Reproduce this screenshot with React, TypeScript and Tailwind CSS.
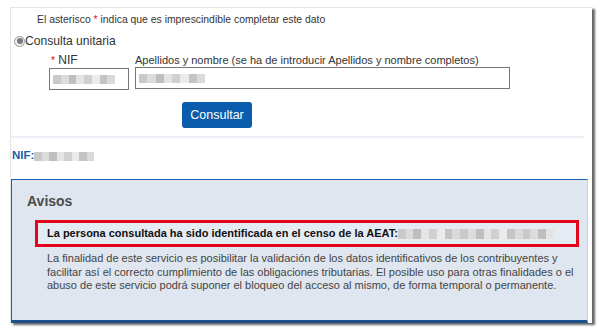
import { useState } from "react";

function Blur({ w, h = 10 }: { w: number; h?: number }) {
    // pixelated stand-in for the redacted values
    const shades = ["#c9c9c9", "#dcdcdc", "#bfbfbf", "#e4e4e4", "#d0d0d0", "#ebebeb", "#c4c4c4", "#dadada"]
    const cells = Math.max(1, Math.round(w / 8))
    return <span className="inline-flex align-middle" style={{ width: w, height: h }}>
        {Array.from({ length: cells }).map((_, i) => (
            <span key={i} className="flex-1 h-full" style={{ background: shades[i % shades.length] }} />
        ))}
    </span>
}

export default function App() {
    const [mode] = useState("unitaria")
    return <div className="w-[600px] h-[331px] bg-white font-['Liberation_Sans',Arial,sans-serif] text-[#333] overflow-hidden pt-[7px] pl-[10px]">
        <div className="w-[582px] h-[316px] bg-white border-l border-t border-[#e6e6e6] shadow-[3px_2px_2px_rgba(0,0,0,0.6)] flex flex-col">
            {/* Formulario */}
            <div className="mr-[8px] h-[130px] border-b-2 border-[#eaf0f6] flex flex-col">
                <p className="text-[10.4px] leading-none text-[#333] mt-[7px] ml-[26px]">
                    El asterisco <span className="text-[#e2001a]">*</span> indica que es imprescindible completar este dato
                </p>
                <label className="flex items-center h-[14px] mt-[9px] ml-[3px] text-[12.1px] leading-none text-[#333]">
                    <span className="w-[11px] h-[11px] rounded-full border border-[#9a9a9a] bg-[#eee] flex items-center justify-center">
                        <span className="w-[6px] h-[6px] rounded-full bg-[#7a7a7a]" />
                    </span>
                    <span>Consulta {mode}</span>
                </label>
                <div className="flex gap-[6px] ml-[38px] mt-[6px]">
                    <div className="flex flex-col gap-[1px]">
                        <span className="text-[12px] leading-[12px] pl-[2px]"><span className="text-[#e2001a] text-[10px]">*</span> NIF</span>
                        <div className="w-[80px] h-[22px] border border-[#767676] bg-white flex items-center px-[3px]">
                            <Blur w={62} h={9} />
                        </div>
                    </div>
                    <div className="flex flex-col gap-[1px]">
                        <span className="text-[11px] leading-[12px]">Apellidos y nombre (se ha de introducir Apellidos y nombre completos)</span>
                        <div className="w-[375px] h-[22px] border border-[#767676] bg-white flex items-center px-[3px]">
                            <Blur w={66} h={9} />
                        </div>
                    </div>
                </div>
                <div className="flex justify-center ml-[-161px] mt-[12px]">
                    <button className="w-[70px] h-[26px] bg-[#0b5cad] text-white text-[12.5px] rounded-[3px]">Consultar</button>
                </div>
            </div>

            {/* Resultado */}
            <div className="flex items-center mt-[12px] ml-[1px] h-[12px]">
                <span className="text-[#1a5da8] font-bold text-[11.5px]">NIF:</span>
                <Blur w={60} h={9} />
            </div>

            <div className="mt-[17px] mr-[4px] flex-1 bg-[#dfe6ef] border border-[#1b62b6] border-r-[#c3d0df] border-b-[3px] border-b-[#1d4f8a] flex flex-col">
                <h2 className="text-[14px] font-bold text-[#4a4a4a] ml-[15px] mt-[14px] leading-none">Avisos</h2>
                <div className="mt-[12px] ml-[23px] mr-[8px] h-[27px] border-[3px] border-[#e3061b] bg-[#e5ebf2] flex items-center pl-[9px]">
                    <span className="text-[11px] font-bold text-[#111]">La persona consultada ha sido identificada en el censo de la AEAT:</span>
                    <Blur w={156} h={10} />
                </div>
                <p className="ml-[35px] mr-[4px] mt-[5px] text-[11px] leading-[13.5px] text-[#444]">
                    La finalidad de este servicio es posibilitar la validación de los datos identificativos de los contribuyentes y facilitar así el correcto cumplimiento de las obligaciones tributarias. El posible uso para otras finalidades o el abuso de este servicio podrá suponer el bloqueo del acceso al mismo, de forma temporal o permanente.
                </p>
            </div>
        </div>
    </div>
}
